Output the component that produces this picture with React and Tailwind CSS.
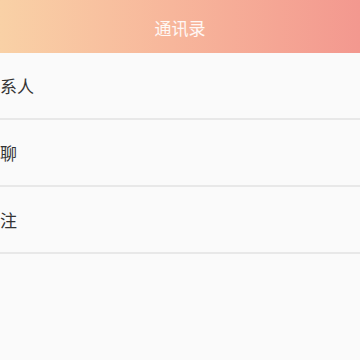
export default function App() {
  const items = ["联系人", "群聊", "关注"];
  return (
    <div
      className="w-[360px] h-[360px] overflow-hidden bg-[#fafafa]"
      style={{ fontFamily: '"Noto Sans CJK SC", "Noto Sans", sans-serif' }}
    >
      <div className="h-[53px] flex items-center justify-center bg-gradient-to-r from-[#f9d1a6] to-[#f3988f]">
        <span className="text-[17px] text-white/90 leading-none pt-[2px]">通讯录</span>
      </div>
      {items.map((t) => (
        <div
          key={t}
          className="h-[67px] border-b-2 border-[#e8e8e8] flex items-center overflow-hidden"
        >
          <span className="-ml-[17px] text-[17px] text-[#333333] leading-none whitespace-nowrap">{t}</span>
        </div>
      ))}
    </div>
  );
}
